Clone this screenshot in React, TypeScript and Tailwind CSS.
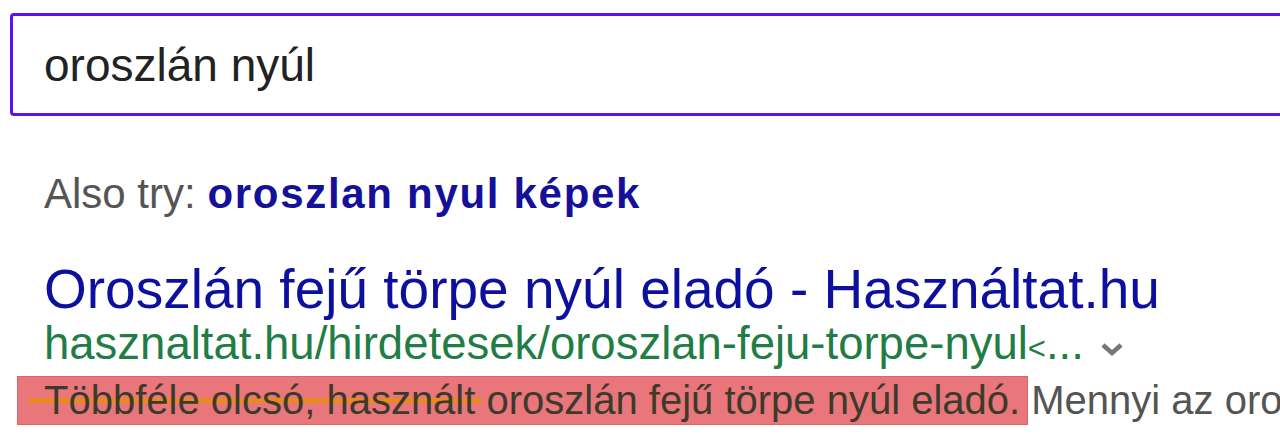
import React from "react";

const ChevronDown: React.FC = () => (
  <svg width="24" height="16" viewBox="0 0 24 16" className="ml-[16px] mt-[6px]">
    <path d="M3 4 L12 12 L21 4" fill="none" stroke="#767676" strokeWidth="4.5" />
  </svg>
);

const App: React.FC = () => {
  return (
    <div className="w-[1280px] h-[439px] overflow-hidden bg-white font-['Liberation_Sans',Arial,sans-serif]">
      {/* search box */}
      <div className="pt-[13px] pl-[10px]">
        <div className="w-[1320px] h-[103px] border-[3px] border-[#5b12f2] rounded-[4px] flex items-center pl-[31px]">
          <span className="text-[46px] leading-none text-[#222222]">oroszlán nyúl</span>
        </div>
      </div>

      <div className="pl-[44px] flex flex-col">
        {/* also try */}
        <div className="mt-[54px] h-[48px] leading-[48px] text-[42px] whitespace-nowrap">
          <span className="text-[#555555]">Also try: </span>
          <span className="font-bold text-[#15109a] tracking-[1.7px]">oroszlan nyul képek</span>
        </div>

        {/* result title */}
        <div className="mt-[41px] h-[60px] leading-[60px] text-[55px] text-[#0d0f9e] whitespace-nowrap">
          Oroszlán fejű törpe nyúl eladó - Használtat.hu
        </div>

        {/* url */}
        <div className="mt-[1px] h-[52px] flex items-center whitespace-nowrap">
          <span className="text-[45.5px] leading-[52px] text-[#1f7d45]">
            hasznaltat.hu/hirdetesek/oroszlan-feju-torpe-nyul
            <span className="text-[31px]">&lt;</span>...
          </span>
          <ChevronDown />
        </div>

        {/* snippet */}
        <div className="relative mt-[4px] h-[49px] whitespace-nowrap">
          <div className="absolute left-[-27px] top-0 w-[1011px] h-[49px] bg-[#e8767b] border border-[#e0636b]" />
          <div className="absolute left-[-16px] top-[22px] w-[454px] h-[5px] bg-[#e98a1e]" />
          <div className="relative text-[40px] leading-[49px]">
            <span className="text-[#3d3a2c]">Többféle olcsó, használt oroszlán fejű törpe nyúl eladó.</span>
            <span className="text-[#545454]"> Mennyi az oroszlánfejű törpenyúl ára?</span>
          </div>
        </div>
      </div>
    </div>
  );
};

export default App;
